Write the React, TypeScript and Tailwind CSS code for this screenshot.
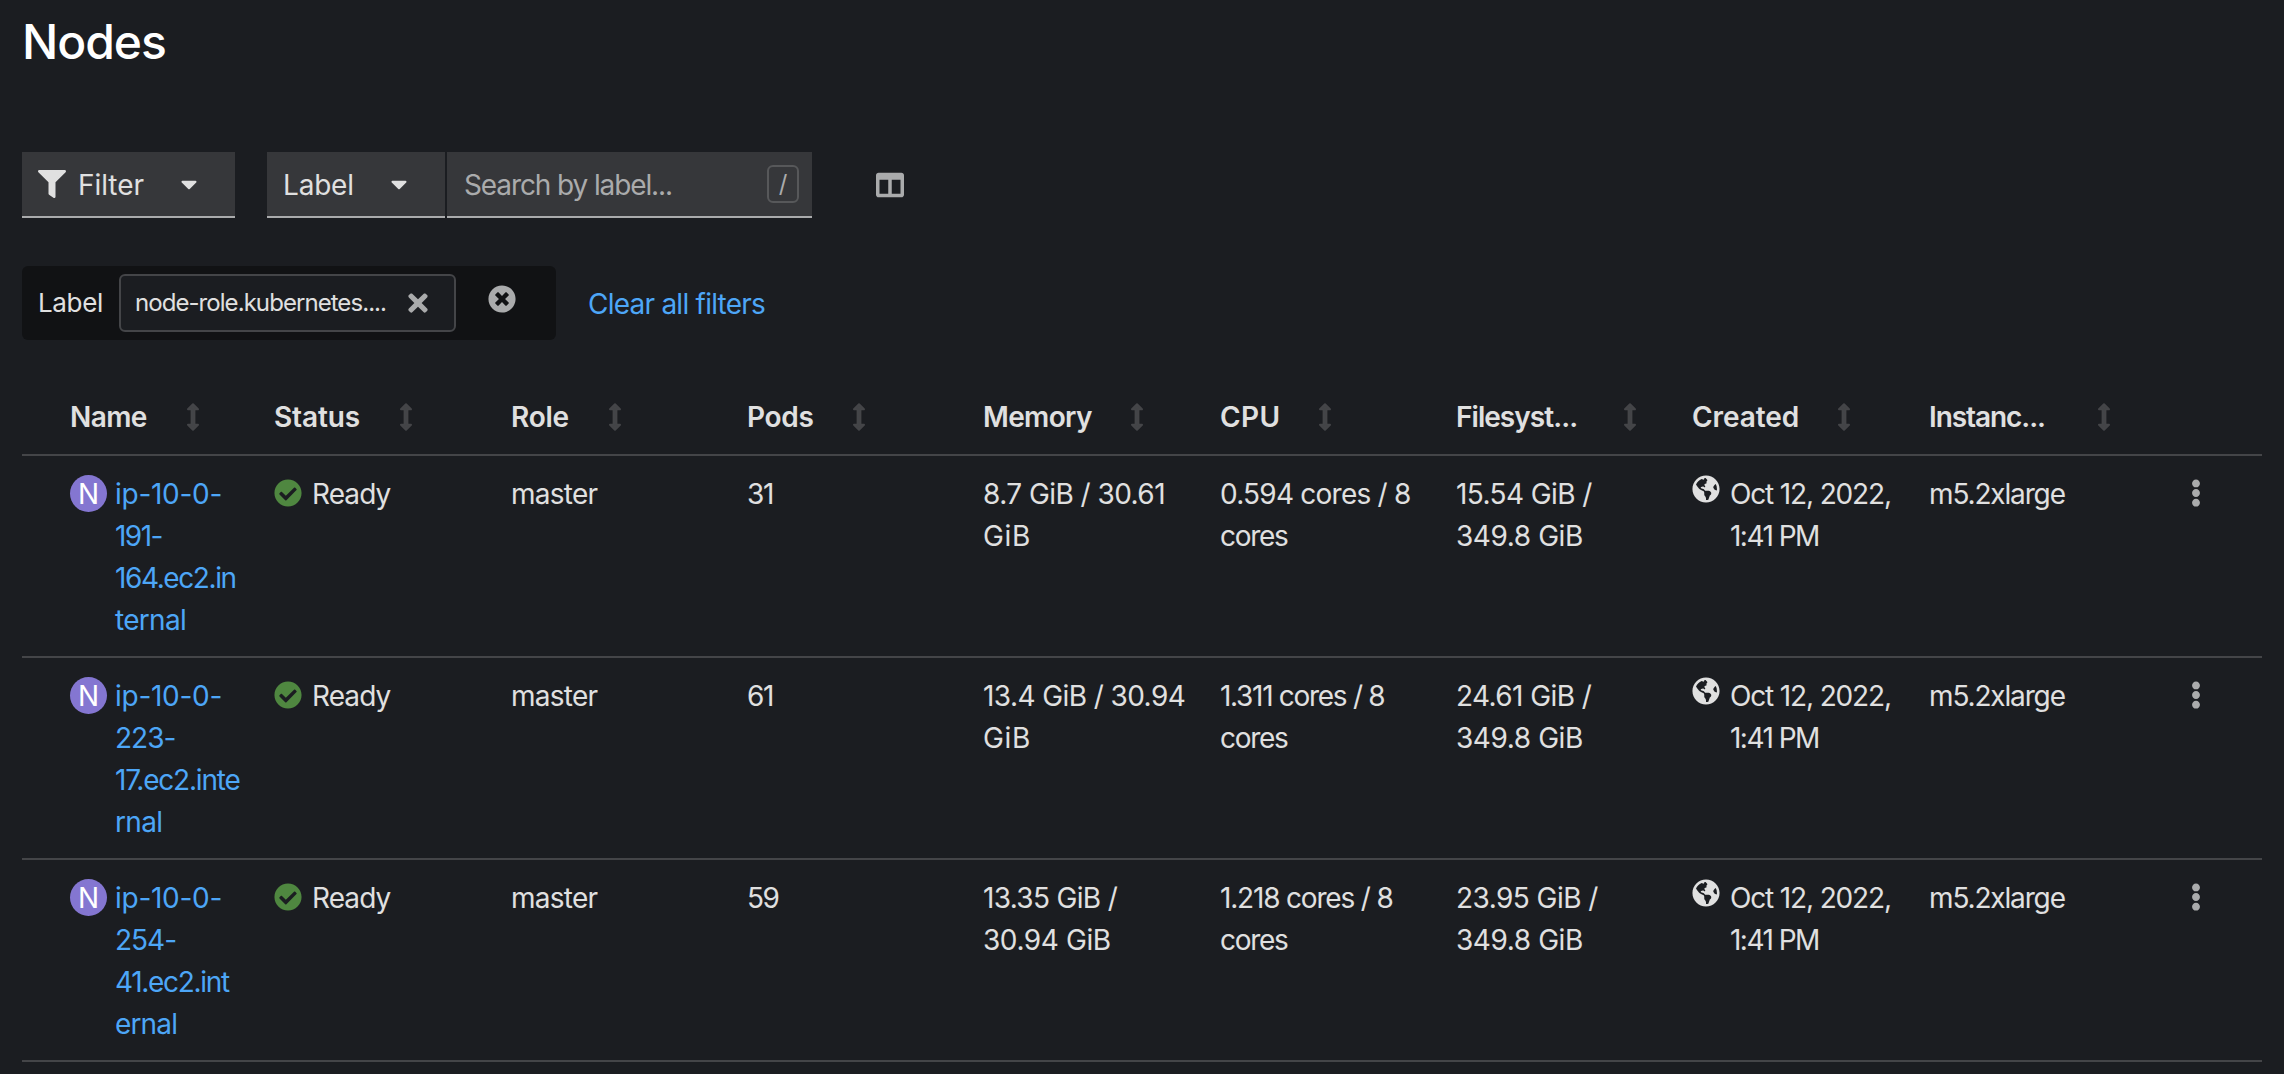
import { FaFilter, FaCaretDown, FaTimes, FaTimesCircle, FaColumns, FaCheckCircle, FaGlobeAmericas, FaEllipsisV } from 'react-icons/fa'

type Cell = { text: string; className: string }[]

const headers = [
  { label: 'Name', className: 'tracking-[-0.6px] mr-[40px]' },
  { label: 'Status', className: 'tracking-[-0.13px] mr-[40px]' },
  { label: 'Role', className: 'tracking-[-0.25px] mr-[40px]' },
  { label: 'Pods', className: 'tracking-[-0.29px] mr-[39px]' },
  { label: 'Memory', className: 'tracking-[-0.64px] mr-[39px]' },
  { label: 'CPU', className: 'tracking-[0.4px] mr-[38px]' },
  { label: 'Filesyst...', className: 'tracking-[-0.95px] mr-[47px]' },
  { label: 'Created', className: 'tracking-[-0.08px] mr-[39px]' },
  { label: 'Instanc...', className: 'tracking-[-1.07px] mr-[53px]' },
]

const gib: Cell[number] = { text: 'GiB', className: 'tracking-[0.66px]' }
const cores: Cell[number] = { text: 'cores', className: 'tracking-[-1.3px]' }
const total: Cell[number] = { text: '349.8 GiB', className: 'tracking-[-0.42px]' }

const nodes: { name: Cell; pods: string; memory: Cell; cpu: Cell; fs: Cell }[] = [
  {
    name: [
      { text: 'ip-10-0-', className: 'tracking-[-0.27px]' },
      { text: '191-', className: 'tracking-[-1.55px]' },
      { text: '164.ec2.in', className: 'tracking-[-1.41px]' },
      { text: 'ternal', className: 'tracking-[-0.69px]' },
    ],
    pods: '31',
    memory: [{ text: '8.7 GiB / 30.61', className: 'tracking-[-0.55px]' }, gib],
    cpu: [{ text: '0.594 cores / 8', className: 'tracking-[-0.77px]' }, cores],
    fs: [{ text: '15.54 GiB /', className: 'tracking-[-0.6px]' }, total],
  },
  {
    name: [
      { text: 'ip-10-0-', className: 'tracking-[-0.27px]' },
      { text: '223-', className: 'tracking-[-1px]' },
      { text: '17.ec2.inte', className: 'tracking-[-1.2px]' },
      { text: 'rnal', className: 'tracking-[-0.69px]' },
    ],
    pods: '61',
    memory: [{ text: '13.4 GiB / 30.94', className: 'tracking-[-0.58px]' }, gib],
    cpu: [{ text: '1.311 cores / 8', className: 'tracking-[-1.3px]' }, cores],
    fs: [{ text: '24.61 GiB /', className: 'tracking-[-0.6px]' }, total],
  },
  {
    name: [
      { text: 'ip-10-0-', className: 'tracking-[-0.27px]' },
      { text: '254-', className: 'tracking-[-1px]' },
      { text: '41.ec2.int', className: 'tracking-[-1.3px]' },
      { text: 'ernal', className: 'tracking-[-0.85px]' },
    ],
    pods: '59',
    memory: [
      { text: '13.35 GiB /', className: 'tracking-[-0.67px]' },
      { text: '30.94 GiB', className: 'tracking-[-0.42px]' },
    ],
    cpu: [{ text: '1.218 cores / 8', className: 'tracking-[-1.18px]' }, cores],
    fs: [{ text: '23.95 GiB /', className: 'tracking-[-0.55px]' }, total],
  },
]

const columns =
  'grid grid-cols-[204px_237px_236px_236px_237px_236px_236px_237px_1fr_auto] pl-12 border-b-2 border-[#444548]'

function SortIcon() {
  return (
    <svg viewBox="0 0 12 28" className="h-7 w-3 shrink-0 overflow-visible text-[#444548]" fill="currentColor" stroke="currentColor" strokeWidth="2" strokeLinejoin="round">
      <path d="M6 1.2 11 6.2H7.4V21.8H11L6 26.8 1 21.8H4.6V6.2H1Z" />
    </svg>
  )
}

function Lines({ cell }: { cell: Cell }) {
  return (
    <div className="flex flex-col">
      {cell.map((line) => (
        <span key={line.text} className={line.className}>
          {line.text}
        </span>
      ))}
    </div>
  )
}

export default function App() {
  return (
    <main className="h-[1074px] overflow-hidden bg-[#1b1d21] pl-[22px] pr-[22px] pt-4 font-['Inter',sans-serif] text-[28px] leading-[42px] text-[#e0e0e0] whitespace-nowrap">
      <h1 className="h-[136px] text-[48px] leading-[52px] font-medium tracking-[-1.04px] text-white">Nodes</h1>

      <div className="flex h-[66px] items-stretch">
        <button className="flex w-[213px] items-center border-b-2 border-[#aaabac] bg-[#36373a] pl-4">
          <FaFilter className="size-7" />
          <span className="ml-3 pt-0.5 tracking-[-0.06px]">Filter</span>
          <FaCaretDown className="ml-8 size-[26px]" />
        </button>
        <button className="ml-8 flex w-[178px] items-center border-b-2 border-[#aaabac] bg-[#36373a] pl-4">
          <span className="pt-0.5 tracking-[-0.2px]">Label</span>
          <FaCaretDown className="ml-8 size-[26px]" />
        </button>
        <div className="ml-0.5 flex w-[365px] items-center border-b-2 border-[#aaabac] bg-[#36373a] pl-[17px] pr-[13px] text-[#aaabac]">
          <span className="pt-0.5 tracking-[-1.11px]">Search by label...</span>
          <kbd className="ml-auto flex h-[38px] w-8 items-center justify-center rounded-md border-2 border-[#57585a] font-['Inter',sans-serif] text-[24px]">
            /
          </kbd>
        </div>
        <div className="ml-16 flex items-center text-[#aaabac]">
          <FaColumns className="size-7" />
        </div>
      </div>

      <div className="mt-12 flex h-[74px] items-center">
        <div className="flex h-full w-[534px] items-center rounded-md bg-[#111214] pl-4">
          <span className="w-[64px] text-[26px] tracking-[-0.34px]">Label</span>
          <div className="ml-[17px] flex h-[58px] w-[337px] items-center rounded-md border-2 border-[#444548] bg-[#1b1d21] pl-3.5">
            <span className="text-[24px] tracking-[-0.94px]">node-role.kubernetes....</span>
            <FaTimes className="ml-[18px] size-7 text-[#aaabac]" />
          </div>
          <FaTimesCircle className="mb-2 ml-8 size-7 text-[#aaabac]" />
        </div>
        <a className="ml-8 pt-0.5 tracking-[-0.76px] text-[#4da6f7]">Clear all filters</a>
      </div>

      <div className={`${columns} h-[116px] items-start pt-[56px]`}>
        {headers.map((h) => (
          <div key={h.label} className="flex items-center font-semibold">
            <span className={h.className}>{h.label}</span>
            <SortIcon />
          </div>
        ))}
        <div />
      </div>

      {nodes.map((node) => (
        <div key={node.name[1].text} className={`${columns} h-[202px] pt-[17px]`}>
          <div className="flex items-start">
            <span className="mt-0.5 flex size-[37px] shrink-0 items-center justify-center rounded-full bg-[#8476d1] text-[28px] text-white">N</span>
            <div className="ml-2 text-[#4da6f7]">
              <Lines cell={node.name} />
            </div>
          </div>
          <div className="flex items-start">
            <FaCheckCircle className="mt-1.5 size-7 text-[#4f8740]" />
            <span className="ml-2.5 tracking-[-0.93px]">Ready</span>
          </div>
          <span className="tracking-[-0.75px]">master</span>
          <span className="tracking-[-1.4px]">{node.pods}</span>
          <Lines cell={node.memory} />
          <Lines cell={node.cpu} />
          <Lines cell={node.fs} />
          <div className="flex items-start">
            <FaGlobeAmericas className="mt-0.5 size-7" />
            <div className="ml-2.5 flex flex-col">
              <span className="tracking-[-1.15px]">Oct 12, 2022,</span>
              <span className="tracking-[-1.52px]">1:41 PM</span>
            </div>
          </div>
          <span className="tracking-[-1.15px]">m5.2xlarge</span>
          <FaEllipsisV className="mr-[52px] mt-1.5 size-7 text-[#aaabac]" />
        </div>
      ))}
    </main>
  )
}
